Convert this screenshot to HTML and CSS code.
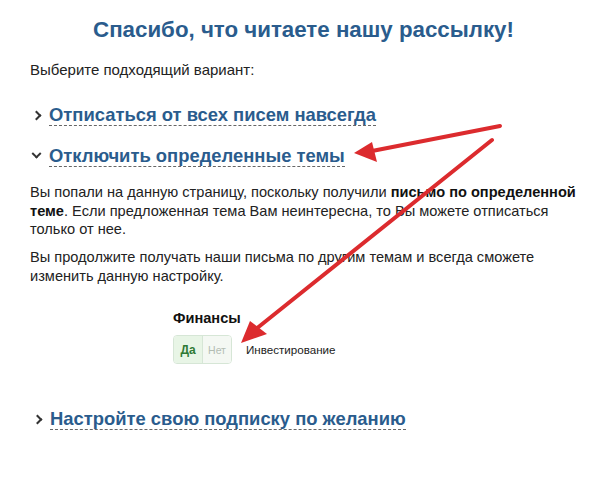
FILE: index.html
```html
<!DOCTYPE html>
<html lang="ru">
<head>
<meta charset="utf-8">
<link rel="stylesheet" href="styles.css">
</head>
<body>
<div class="page">
  <h1 class="title">Спасибо, что читаете нашу рассылку!</h1>
  <p class="lead">Выберите подходящий вариант:</p>

  <div class="option first">
    <span class="chev right"></span><span class="link">Отписаться от всех писем навсегда</span>
  </div>
  <div class="option second">
    <span class="chev down"></span><span class="link">Отключить определенные темы</span>
  </div>

  <div class="details">
    <p class="text">Вы попали на данную страницу, поскольку получили <b>письмо по определенной теме</b>. Если предложенная тема Вам неинтересна, то Вы можете отписаться только от нее.</p>
    <p class="text">Вы продолжите получать наши письма по другим темам и всегда сможете изменить данную настройку.</p>

    <div class="topics">
      <div class="topic-head">Финансы</div>
      <div class="topic-row">
        <div class="toggle">
          <span class="yes">Да</span><span class="no">Нет</span>
        </div>
        <span class="topic-name">Инвестирование</span>
      </div>
    </div>
  </div>

  <div class="option third">
    <span class="chev right"></span><span class="link">Настройте свою подписку по желанию</span>
  </div>

  <svg class="arrows" width="607" height="480" viewBox="0 0 607 480">
    <g stroke="#dc2b2e" stroke-width="4" stroke-linecap="round" fill="none">
      <line x1="500" y1="126" x2="372" y2="151"/>
      <line x1="492" y1="140" x2="256" y2="329"/>
    </g>
    <g fill="#dc2b2e">
      <polygon points="354,153 372,142 377,162"/>
      <polygon points="241,343 250,321 267,334"/>
    </g>
  </svg>
</div>
</body>
</html>
```
FILE: styles.css
```css
html, body {
  margin: 0;
  padding: 0;
  background: #ffffff;
}
.page {
  position: relative;
  width: 607px;
  height: 480px;
  box-sizing: border-box;
  padding: 16px 16px 0 30px;
  font-family: "Liberation Sans", Arial, sans-serif;
  color: #222;
  overflow: hidden;
}
.title {
  margin: 0 0 0 -30px;
  width: 607px;
  text-align: center;
  font-size: 22.3px;
  line-height: 28px;
  font-weight: bold;
  color: #2a5c8d;
}
.lead {
  margin: 17px 0 0;
  font-size: 15px;
  line-height: 18px;
  color: #222;
}
.option {
  display: flex;
  align-items: center;
  gap: 6px;
  margin-left: 3px;
}
.option.first { margin-top: 26px; }
.option.second { margin-top: 20px; }
.option.third { margin-top: 45px; margin-left: 4px; }
.chev {
  width: 5px;
  height: 5px;
  border-right: 2.5px solid #333;
  border-bottom: 2.5px solid #333;
  flex: none;
}
.chev.right { transform: rotate(-45deg); margin-right: 3px; }
.chev.down { transform: rotate(45deg) translate(-2px, -2px); margin-right: 3px; }
.link {
  font-size: 18.4px;
  line-height: 20px;
  font-weight: bold;
  color: #2a5c8d;
  border-bottom: 1px dashed #666;
}
.details {
  padding-top: 16px;
}
.text {
  margin: 0 0 9.5px;
  font-size: 14.6px;
  line-height: 18.5px;
  color: #222;
}
.text b { color: #111; }
.topics {
  margin: 24px 0 0 143px;
}
.topic-head {
  font-size: 14.6px;
  font-weight: bold;
  line-height: 18px;
  color: #111;
}
.topic-row {
  display: flex;
  align-items: center;
  gap: 14px;
  margin-top: 8px;
}
.toggle {
  display: flex;
  border: 1px solid #d6e6d6;
  border-radius: 4px;
  overflow: hidden;
  height: 27px;
}
.toggle span {
  display: flex;
  align-items: center;
  justify-content: center;
  width: 28px;
}
.toggle .yes {
  font-size: 12px;
  background: #e8f5e6;
  color: #2f7a34;
  font-weight: bold;
  border-right: 1px solid #d6e6d6;
}
.toggle .no {
  font-size: 10.5px;
  background: #f4f8f3;
  color: #b3bdb3;
}
.topic-name {
  font-size: 11.6px;
  color: #222;
}
.arrows {
  position: absolute;
  left: 0;
  top: 0;
  pointer-events: none;
}
```
